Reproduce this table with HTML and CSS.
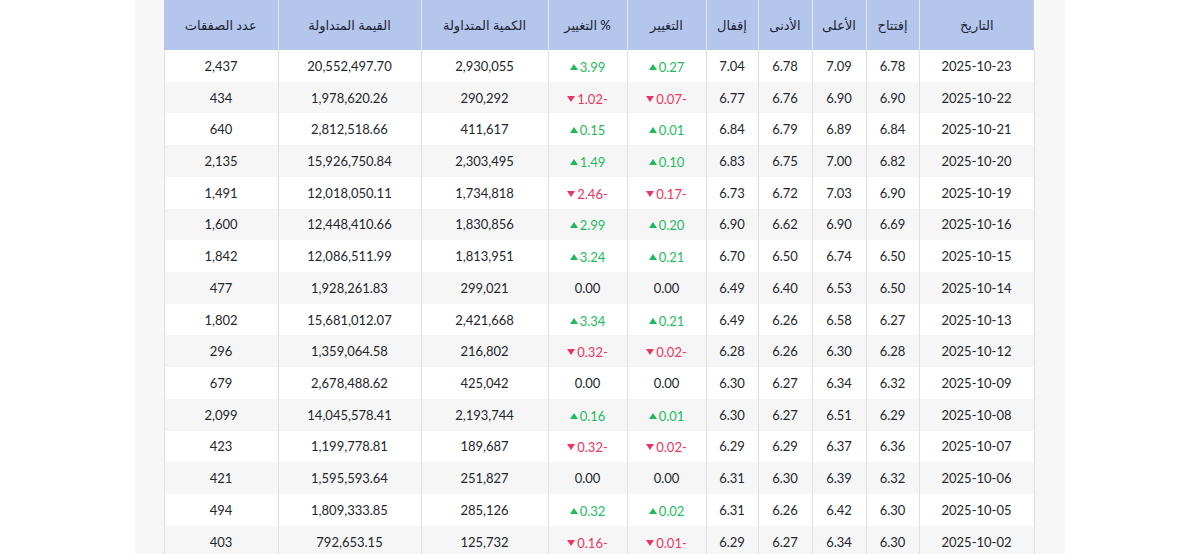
FILE: index.html
```html
<!DOCTYPE html>
<html lang="ar" dir="rtl">
<head>
<meta charset="utf-8">
<title>الأسعار التاريخية</title>
<link rel="stylesheet" href="styles.css">
</head>
<body>
<div class="panel">
<table class="hist">
<colgroup>
<col class="c-date"><col class="c-open"><col class="c-high"><col class="c-low"><col class="c-close"><col class="c-chg"><col class="c-pct"><col class="c-vol"><col class="c-val"><col class="c-trd">
</colgroup>
<thead>
<tr><th>التاريخ</th><th>إفتتاح</th><th>الأعلى</th><th>الأدنى</th><th>إقفال</th><th>التغيير</th><th>% التغيير</th><th>الكمية المتداولة</th><th>القيمة المتداولة</th><th>عدد الصفقات</th></tr>
</thead>
<tbody>
<tr><td>2025-10-23</td><td>6.78</td><td>7.09</td><td>6.78</td><td>7.04</td><td><span class="chg up"><i></i>0.27</span></td><td><span class="chg up"><i></i>3.99</span></td><td>2,930,055</td><td>20,552,497.70</td><td>2,437</td></tr>
<tr><td>2025-10-22</td><td>6.90</td><td>6.90</td><td>6.76</td><td>6.77</td><td><span class="chg dn"><i></i>0.07-</span></td><td><span class="chg dn"><i></i>1.02-</span></td><td>290,292</td><td>1,978,620.26</td><td>434</td></tr>
<tr><td>2025-10-21</td><td>6.84</td><td>6.89</td><td>6.79</td><td>6.84</td><td><span class="chg up"><i></i>0.01</span></td><td><span class="chg up"><i></i>0.15</span></td><td>411,617</td><td>2,812,518.66</td><td>640</td></tr>
<tr><td>2025-10-20</td><td>6.82</td><td>7.00</td><td>6.75</td><td>6.83</td><td><span class="chg up"><i></i>0.10</span></td><td><span class="chg up"><i></i>1.49</span></td><td>2,303,495</td><td>15,926,750.84</td><td>2,135</td></tr>
<tr><td>2025-10-19</td><td>6.90</td><td>7.03</td><td>6.72</td><td>6.73</td><td><span class="chg dn"><i></i>0.17-</span></td><td><span class="chg dn"><i></i>2.46-</span></td><td>1,734,818</td><td>12,018,050.11</td><td>1,491</td></tr>
<tr><td>2025-10-16</td><td>6.69</td><td>6.90</td><td>6.62</td><td>6.90</td><td><span class="chg up"><i></i>0.20</span></td><td><span class="chg up"><i></i>2.99</span></td><td>1,830,856</td><td>12,448,410.66</td><td>1,600</td></tr>
<tr><td>2025-10-15</td><td>6.50</td><td>6.74</td><td>6.50</td><td>6.70</td><td><span class="chg up"><i></i>0.21</span></td><td><span class="chg up"><i></i>3.24</span></td><td>1,813,951</td><td>12,086,511.99</td><td>1,842</td></tr>
<tr><td>2025-10-14</td><td>6.50</td><td>6.53</td><td>6.40</td><td>6.49</td><td>0.00</td><td>0.00</td><td>299,021</td><td>1,928,261.83</td><td>477</td></tr>
<tr><td>2025-10-13</td><td>6.27</td><td>6.58</td><td>6.26</td><td>6.49</td><td><span class="chg up"><i></i>0.21</span></td><td><span class="chg up"><i></i>3.34</span></td><td>2,421,668</td><td>15,681,012.07</td><td>1,802</td></tr>
<tr><td>2025-10-12</td><td>6.28</td><td>6.30</td><td>6.26</td><td>6.28</td><td><span class="chg dn"><i></i>0.02-</span></td><td><span class="chg dn"><i></i>0.32-</span></td><td>216,802</td><td>1,359,064.58</td><td>296</td></tr>
<tr><td>2025-10-09</td><td>6.32</td><td>6.34</td><td>6.27</td><td>6.30</td><td>0.00</td><td>0.00</td><td>425,042</td><td>2,678,488.62</td><td>679</td></tr>
<tr><td>2025-10-08</td><td>6.29</td><td>6.51</td><td>6.27</td><td>6.30</td><td><span class="chg up"><i></i>0.01</span></td><td><span class="chg up"><i></i>0.16</span></td><td>2,193,744</td><td>14,045,578.41</td><td>2,099</td></tr>
<tr><td>2025-10-07</td><td>6.36</td><td>6.37</td><td>6.29</td><td>6.29</td><td><span class="chg dn"><i></i>0.02-</span></td><td><span class="chg dn"><i></i>0.32-</span></td><td>189,687</td><td>1,199,778.81</td><td>423</td></tr>
<tr><td>2025-10-06</td><td>6.32</td><td>6.39</td><td>6.30</td><td>6.31</td><td>0.00</td><td>0.00</td><td>251,827</td><td>1,595,593.64</td><td>421</td></tr>
<tr><td>2025-10-05</td><td>6.30</td><td>6.42</td><td>6.26</td><td>6.31</td><td><span class="chg up"><i></i>0.02</span></td><td><span class="chg up"><i></i>0.32</span></td><td>285,126</td><td>1,809,333.85</td><td>494</td></tr>
<tr><td>2025-10-02</td><td>6.30</td><td>6.34</td><td>6.27</td><td>6.29</td><td><span class="chg dn"><i></i>0.01-</span></td><td><span class="chg dn"><i></i>0.16-</span></td><td>125,732</td><td>792,653.15</td><td>403</td></tr>
</tbody>
</table>
</div>
</body>
</html>
```

FILE: styles.css
```css
html, body {
  margin: 0;
  padding: 0;
  background: #ffffff;
}
body {
  font-family: "Lato", "Noto Sans", "DejaVu Sans", sans-serif;
  color: #22262c;
}
.panel {
  width: 930px;
  margin: 0 auto;
  padding: 0 30px;
  box-sizing: border-box;
  background: #f7f7f8;
  min-height: 554px;
}
.hist {
  width: 870px;
  border-collapse: collapse;
  table-layout: fixed;
  background: #ffffff;
  font-size: 13px;
}
.c-date { width: 115px; }
.c-open { width: 53px; }
.c-high { width: 54px; }
.c-low { width: 54px; }
.c-close { width: 52px; }
.c-chg { width: 79px; }
.c-pct { width: 79px; }
.c-vol { width: 127px; }
.c-val { width: 143px; }
.c-trd { width: 114px; }

.hist th {
  height: 50px;
  padding: 0 4px;
  background: #b4c6ec;
  color: #1d2535;
  font-weight: 500;
  font-size: 13px;
  text-align: center;
  border-left: 1px solid #dfe7f7;
  white-space: nowrap;
}
.hist th:last-child { border-left: none; }
.hist td {
  height: 31.73px;
  padding: 0 4px;
  text-align: center;
  white-space: nowrap;
  border-left: 1.5px solid #e0e0e3;
  border-right: 1.5px solid #e0e0e3;
  line-height: 16px;
}
.hist tbody tr:nth-child(even) td { background: #f6f6f7; }

.chg {
  direction: ltr;
  display: inline-flex;
  align-items: center;
  gap: 2px;
}
.chg i {
  display: inline-block;
  width: 0;
  height: 0;
  border-left: 4.5px solid transparent;
  border-right: 4.5px solid transparent;
}
.chg.up { color: #1fba5c; }
.chg.up i { border-bottom: 6px solid #1fba5c; }
.chg.dn { color: #e83660; }
.chg.dn i { border-top: 6px solid #e83660; }
```
